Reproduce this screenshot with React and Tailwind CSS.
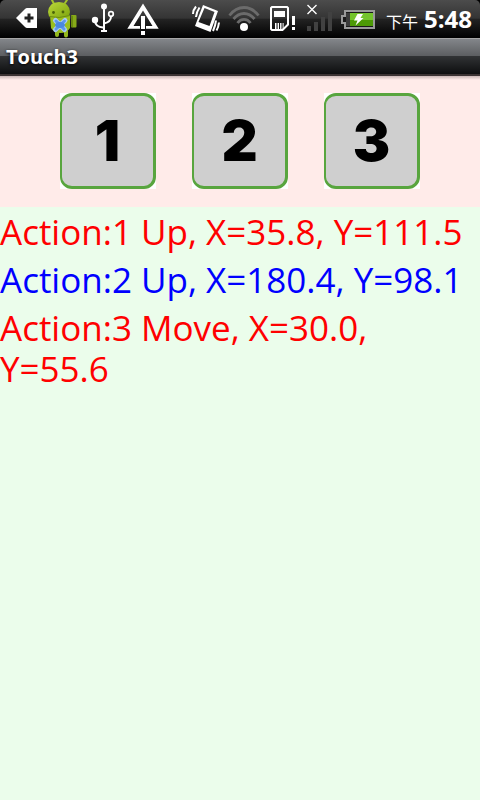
import React, { useState } from 'react';

const pads = [1, 2, 3];

const initialLog = [
  { id: 1, text: 'Action:1 Up, X=35.8, Y=111.5', color: 'text-[#ff0000]' },
  { id: 2, text: 'Action:2 Up, X=180.4, Y=98.1', color: 'text-[#0000ff]' },
  { id: 3, text: 'Action:3 Move, X=30.0, Y=55.6', color: 'text-[#ff0000]' },
];

const BackIcon = () => (
  <svg className="w-10 h-[38px]" viewBox="0 0 40 38" aria-hidden="true">
    <path d="M13 18 L22 9 Q23 8 24 8 H34 V28 H24 Q23 28 22 27 Z" fill="#fff" />
    <path d="M26 13.5 V22.5 M21.5 18 H30.5" stroke="#222" strokeWidth="3" />
  </svg>
);

const AndroidIcon = () => (
  <svg className="w-10 h-[38px]" viewBox="0 0 40 38" aria-hidden="true">
    <defs>
      <linearGradient id="droid" x1="0" y1="0" x2="1" y2="1">
        <stop offset="0" stopColor="#bcd93a" />
        <stop offset="1" stopColor="#7fa50f" />
      </linearGradient>
    </defs>
    <path d="M11 4 L9 0 M22 3 L24 0" stroke="#a4c42a" strokeWidth="2" strokeLinecap="round" />
    <rect x="28" y="15" width="5.500" height="12.500" rx="1" fill="#86aa18" />
    <path d="M29 16 V27" stroke="#4f6b08" />
    <path d="M7 15 H27 L27 28 Q24 33 17 33 Q10 32 8 28 Z" fill="#9abf20" />
    <path d="M14 31 V35 M23 31 V35.500" stroke="#93b81c" strokeWidth="4" strokeLinecap="round" />
    <path d="M5 12 Q6 2 16 2 Q26 2 27 12 L26 16 Q16 18.500 6 16.500 Z" fill="url(#droid)" />
    <path d="M6 16.500 Q16 19 27 15.500" fill="none" stroke="#6c8b12" />
    <circle cx="10.500" cy="12.500" r="1.400" fill="#4a640a" />
    <circle cx="20" cy="12" r="1.400" fill="#4a640a" />
    <path d="M12.500 20.500 L21.500 29.500 M22 20.500 L12.500 29.500" stroke="#a9cbf7" strokeWidth="5" strokeLinecap="round" />
    <path d="M13 21 L21 29 M21.500 21 L13 29" stroke="#5b97ea" strokeWidth="3" strokeLinecap="round" />
    <ellipse cx="17" cy="25" rx="5" ry="3" fill="#4a88e0" />
  </svg>
);

const UsbIcon = () => (
  <svg className="w-10 h-[38px]" viewBox="0 0 40 38" fill="none" stroke="#fff" strokeWidth="2" aria-hidden="true">
    <path d="M21 6 V31" />
    <circle cx="21" cy="6.500" r="3" fill="#fff" stroke="none" />
    <circle cx="12" cy="20" r="3.200" fill="#fff" stroke="none" />
    <path d="M12 21 Q12.500 27 20 27.500" />
    <circle cx="28" cy="14" r="2.300" strokeWidth="1.700" />
    <path d="M28 16.500 Q28 22 21 23.500" />
    <path d="M18 31 H24" strokeWidth="2" />
  </svg>
);

const WarningIcon = () => (
  <svg className="w-10 h-[38px]" viewBox="0 0 40 38" aria-hidden="true">
    <path
      d="M20 3.500 L35.700 28.700 H23 V26 H29.500 L20 10.500 L10.500 26 H17 V28.700 H4.300 Z"
      fill="#fff"
    />
    <rect x="18" y="16" width="4" height="13" fill="#fff" />
    <rect x="18" y="31" width="4" height="4" fill="#fff" />
  </svg>
);

const VibrateIcon = () => (
  <svg className="w-[38px] h-[38px]" viewBox="0 0 38 38" fill="none" stroke="#fff" aria-hidden="true">
    <path
      fillRule="evenodd"
      fill="#fff"
      stroke="none"
      d="M17 5 L32 11 L24.500 32 L9 26 Z M18.500 8 L12.500 22 L23.500 26 L28.500 12 Z"
    />
    <path d="M10 6.500 Q7 10 7 14 M13.500 7.500 Q10.500 12 10 17 M30 20.500 Q29.500 25.500 27 31 M33 22.500 Q32.500 27 30.500 30.500" strokeWidth="2" />
  </svg>
);

const WifiIcon = () => (
  <svg className="w-[38px] h-[38px]" viewBox="0 0 38 38" fill="none" stroke="#6b6b6b" strokeWidth="2.800" aria-hidden="true">
    <path d="M5.500 15.500 Q11.500 7.500 20 7.500 Q28.500 7.500 34.500 15.500" />
    <path d="M9.500 19 Q14 13.500 20 13.500 Q26 13.500 30.500 19" />
    <path d="M13.500 23 Q16 19.300 20 19.300 Q24 19.300 26.500 23" />
    <circle cx="20" cy="27" r="4" fill="#fff" stroke="none" />
  </svg>
);

const SimIcon = () => (
  <svg className="w-[38px] h-[38px]" viewBox="0 0 38 38" fill="#fff" aria-hidden="true">
    <path d="M10 7 H25 L26 8 V24.500 L20.500 30 H10 L9 29 V8 Z" fill="none" stroke="#fff" strokeWidth="2" />
    <rect x="12" y="11" width="11" height="6" />
    <path d="M13 23 H14.500 V30 H13 Z M15.600 23 H17 V30 H15.600 Z M18.100 23 H19.500 V30 H18.100 Z M20.600 23 H21.600 V29 H20.600 Z" />
    <rect x="30" y="16" width="3" height="9" />
    <rect x="30" y="27" width="3" height="3" />
  </svg>
);

const SignalIcon = () => (
  <svg className="w-[38px] h-[38px]" viewBox="0 0 38 38" fill="#414141" aria-hidden="true">
    <rect x="7" y="26" width="4" height="5" />
    <rect x="14" y="22" width="4" height="9" />
    <rect x="21" y="17" width="4" height="14" />
    <rect x="28" y="12" width="4" height="19" />
    <path d="M7.500 5 L16.500 14 M16.500 5 L7.500 14" stroke="#fff" strokeWidth="1.400" />
  </svg>
);

const BatteryIcon = () => (
  <svg className="w-[38px] h-[38px]" viewBox="0 0 38 38" aria-hidden="true">
    <path d="M7 11 H36 V28 H7 V23 H4 V16 H7 Z" fill="#1a1a1a" stroke="#9a9a9a" strokeWidth="2" />
    <rect x="8" y="13" width="4" height="13" fill="#3b3b3b" />
    <rect x="12" y="13" width="23" height="7" fill="#74c42c" />
    <rect x="12" y="20" width="23" height="6" fill="#4c9a05" />
    <path d="M19.500 14 H25 L22.500 18 H25.500 L17.500 25.500 L19.500 20.500 H16 Z" fill="#fff" />
  </svg>
);

const StatusBar = () => (
  <div className="bg-black">
    <div className="flex h-[38px] items-center rounded-t-[5px] bg-[linear-gradient(#4c4c4c_0%,#343434_48%,#232323_50%,#000_100%)] pl-[3px] pr-2">
      <BackIcon />
      <AndroidIcon />
      <UsbIcon />
      <WarningIcon />
      <div className="ml-auto flex items-center">
        <VibrateIcon />
        <WifiIcon />
        <SimIcon />
        <SignalIcon />
        <BatteryIcon />
        <div className="ml-2.5 flex items-baseline gap-1.5 pt-0.5 text-white">
          <span className="text-base leading-6">下午</span>
          <time className="text-2xl leading-6 font-bold">5:48</time>
        </div>
      </div>
    </div>
  </div>
);

const TitleBar = () => (
  <header className="h-[38px] border-t border-[#a6a6a6] border-b-2 border-b-[#3a3232] bg-[linear-gradient(#83868a_0%,#5c5e61_48%,#303234_50%,#0d0e0f_100%)] px-1.5">
    <h1 className="text-xl leading-[35px] font-bold text-white [text-shadow:0_1px_3px_#000]">Touch3</h1>
  </header>
);

const PadButton = ({ value, onPress }) => (
  <button type="button" onClick={() => onPress(value)} className="size-24 bg-white">
    <span className="flex size-full items-center justify-center rounded-xl border-3 border-l-2 border-[#58a53e] bg-[#cfcfcf] font-[Inter,sans-serif] text-[56px] leading-[60px] font-black text-black">
      {value}
    </span>
  </button>
);

const App = () => {
  const [log, setLog] = useState(initialLog);

  // Toggle the line colour of the pad that was pressed
  const handlePress = (id) => {
    setLog(current =>
      current.map(entry =>
        entry.id === id
          ? { ...entry, color: entry.color === 'text-[#ff0000]' ? 'text-[#0000ff]' : 'text-[#ff0000]' }
          : entry
      )
    );
  };

  return (
    <div className="flex min-h-screen flex-col bg-[#ebfdeb] font-['Open_Sans','Noto_Sans_CJK_TC',sans-serif]">
      <StatusBar />
      <TitleBar />
      <div className="flex justify-center gap-9 bg-[linear-gradient(#c9b6b5_0px,#ffebe9_4px)] pt-[17px] pb-[18px]">
        {pads.map(value => (
          <PadButton key={value} value={value} onPress={handlePress} />
        ))}
      </div>
      <main className="flex flex-1 flex-col gap-[7px] pt-1">
        {log.map(entry => (
          <p key={entry.id} className={`text-[35px] leading-[41px] ${entry.color}`}>
            {entry.text}
          </p>
        ))}
      </main>
    </div>
  );
};

export default App;
